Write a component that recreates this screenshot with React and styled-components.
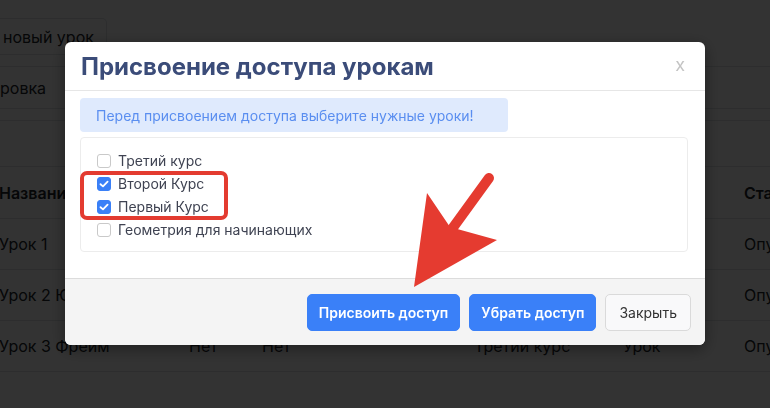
import React from 'react';
import styled, { createGlobalStyle } from 'styled-components';

const GlobalStyle = createGlobalStyle`
  html, body {
    margin: 0;
    padding: 0;
    background: #fff;
    font-family: Inter, "Noto Sans", sans-serif;
    overflow: hidden;
  }
`

const Page = styled.div`
  width: 770px;
  height: 408px;
  overflow: hidden;
  background: #fff;
  color: #212529;
  font-size: 16px;
`

const Toolbar = styled.div`
  display: flex;
  align-items: flex-start;
  padding-top: 18px;
  height: 67px;
  box-sizing: border-box;
  border-bottom: 1px solid #dee2e6;
`

const GhostButton = styled.div`
  height: 37px;
  box-sizing: border-box;
  display: flex;
  align-items: center;
  padding: 0 12px 0 4px;
  margin-left: -1px;
  border: 1px solid #dee2e6;
  border-left: none;
  border-radius: 0 5px 5px 0;
`

const TabRow = styled.div`
  height: 41px;
  display: flex;
  align-items: center;
  border-bottom: 1px solid #dee2e6;
`

const Spacer = styled.div`
  height: 11px;
  border-bottom: 1px solid #dee2e6;
  margin-bottom: 45px;
`

const Table = styled.div`
  display: grid;
  grid-template-columns: 190px 73px 212px 149px 121px 1fr;
  margin-left: -1px;
  border-top: 1px solid #dee2e6;
`

const Cell = styled.div`
  height: ${p => (p.$head ? 51 : 50)}px;
  display: flex;
  align-items: center;
  border-bottom: 1px solid #dee2e6;
  font-weight: ${p => (p.$head ? 600 : 400)};
  white-space: nowrap;
`

const Overlay = styled.div`
  position: fixed;
  inset: 0;
  background: rgba(0, 0, 0, 0.8);
  display: flex;
  justify-content: center;
  align-items: flex-start;
  padding-top: 42px;
`

const Modal = styled.div`
  width: 640px;
  background: #fff;
  border-radius: 6px;
  overflow: hidden;
  box-shadow: 0 4px 16px rgba(0, 0, 0, 0.4);
`

const Header = styled.div`
  height: 48px;
  display: flex;
  align-items: center;
  justify-content: space-between;
  padding: 0 20px 0 16px;
  border-bottom: 1px solid #e6e6e6;
`

const Title = styled.h2`
  margin: 0;
  font-size: 24px;
  font-weight: 700;
  color: #3b4c79;
`

const Close = styled.span`
  font-size: 18px;
  color: #c4c4c4;
  margin-top: -4px;
`

const Body = styled.div`
  padding: 7px 17px 26px 15px;
  display: flex;
  flex-direction: column;
  gap: 5px;
`

const Alert = styled.div`
  align-self: flex-start;
  width: 428px;
  height: 34px;
  box-sizing: border-box;
  display: flex;
  align-items: center;
  padding: 0 16px;
  background: #dfeafd;
  color: #5a8ef0;
  font-size: 14px;
  border-radius: 4px;
`

const ListBox = styled.div`
  position: relative;
  height: 115px;
  box-sizing: border-box;
  border: 1px solid #ececec;
  border-radius: 4px;
  padding: 11px 16px 0;
  display: flex;
  flex-direction: column;
`

const Item = styled.label`
  height: 23px;
  display: flex;
  align-items: center;
  gap: 7px;
  font-size: 14px;
  color: #3f4352;
`

const Box = styled.span`
  width: 14px;
  height: 14px;
  box-sizing: border-box;
  border-radius: 3px;
  border: 1px solid ${p => (p.$on ? '#3a80f7' : '#c9c9c9')};
  background: ${p => (p.$on ? '#3a80f7' : '#fff')};
  display: flex;
  align-items: center;
  justify-content: center;
`

const Highlight = styled.div`
  position: absolute;
  left: -1px;
  top: 33px;
  width: 148px;
  height: 49px;
  box-sizing: border-box;
  border: 4px solid #e33b30;
  border-radius: 7px;
`

const Footer = styled.div`
  height: 67px;
  box-sizing: border-box;
  background: #f4f4f4;
  border-top: 1px solid #dcdcdc;
  display: flex;
  align-items: center;
  justify-content: flex-end;
  gap: 9px;
  padding: 0 14px;
`

const Button = styled.button`
  height: 37px;
  padding: 0 ${p => (p.$plain ? 13 : 11)}px;
  border-radius: 5px;
  font-family: Inter, "Noto Sans", sans-serif;
  font-size: 14px;
  font-weight: ${p => (p.$plain ? 400 : 600)};
  color: ${p => (p.$plain ? '#333' : '#fff')};
  background: ${p => (p.$plain ? '#f9f9fa' : '#3a80f8')};
  border: 1px solid ${p => (p.$plain ? '#dadada' : '#3a80f8')};
`

const ArrowLayer = styled.svg`
  position: fixed;
  left: 0;
  top: 0;
  pointer-events: none;
`

const Check = () => (
  <svg width="10" height="8" viewBox="0 0 10 8">
    <path d="M1.5 4.2 L4 6.4 L8.6 1.6" fill="none" stroke="#fff" strokeWidth="1.8" strokeLinecap="round" strokeLinejoin="round" />
  </svg>
)

const courses = [
  { name: 'Третий курс', on: false },
  { name: 'Второй Курс', on: true },
  { name: 'Первый Курс', on: true },
  { name: 'Геометрия для начинающих', on: false },
]

const rows = [
  ['Урок 1', '', '', '', '', 'Опубликован'],
  ['Урок 2 Ютуб', '', '', '', '', 'Опубликован'],
  ['Урок 3 Фрейм', 'Нет', 'Нет', 'Третий курс', 'Урок', 'Опубликован'],
]

export default function App() {
  return (
    <>
      <GlobalStyle />
      <Page>
        <Toolbar>
          <GhostButton>новый урок</GhostButton>
        </Toolbar>
        <TabRow>ровка</TabRow>
        <Spacer />
        <Table>
          {['Название', '', '', '', '', 'Статус'].map((h, i) => (
            <Cell key={i} $head>{h}</Cell>
          ))}
          {rows.map((r, i) =>
            r.map((c, j) => (
              <Cell key={i + '-' + j}>{c}</Cell>
            ))
          )}
        </Table>
      </Page>

      <Overlay>
        <Modal>
          <Header>
            <Title>Присвоение доступа урокам</Title>
            <Close>x</Close>
          </Header>
          <Body>
            <Alert>Перед присвоением доступа выберите нужные уроки!</Alert>
            <ListBox>
              {courses.map(c => (
                <Item key={c.name}>
                  <Box $on={c.on}>{c.on && <Check />}</Box>
                  {c.name}
                </Item>
              ))}
              <Highlight />
            </ListBox>
          </Body>
          <Footer>
            <Button>Присвоить доступ</Button>
            <Button>Убрать доступ</Button>
            <Button $plain>Закрыть</Button>
          </Footer>
        </Modal>
      </Overlay>

      <ArrowLayer width="770" height="408" viewBox="0 0 770 408">
        <line x1="489" y1="178" x2="452" y2="229" stroke="#e53b30" strokeWidth="10" strokeLinecap="round" />
        <polygon points="427,193 450,227 497,240 414,287" fill="#e53b30" />
      </ArrowLayer>
    </>
  );
}
